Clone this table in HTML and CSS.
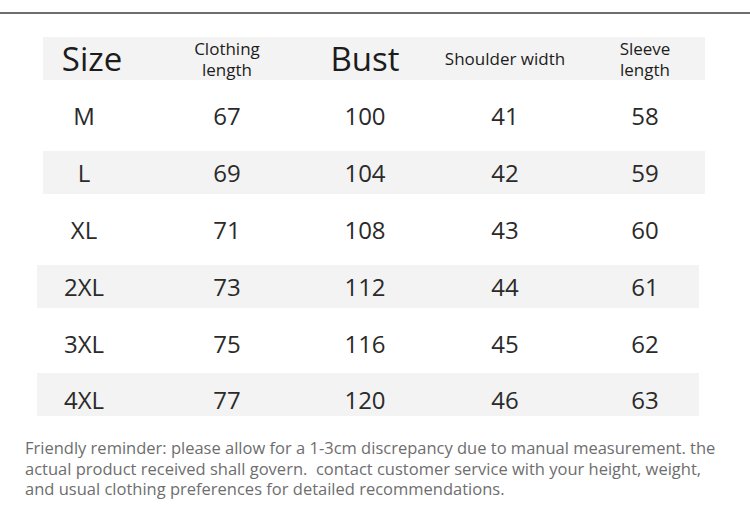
FILE: index.html
```html
<!DOCTYPE html>
<html lang="en">
<head>
<meta charset="utf-8">
<title>Size chart</title>
<link rel="stylesheet" href="styles.css">
</head>
<body>
<div class="topline"></div>
<div class="chart">
  <div class="row head shade">
    <div class="cell big first">Size</div>
    <div class="cell small">Clothing<br>length</div>
    <div class="cell big">Bust</div>
    <div class="cell small">Shoulder width</div>
    <div class="cell small">Sleeve<br>length</div>
  </div>
  <div class="row">
    <div class="cell">M</div><div class="cell">67</div><div class="cell">100</div><div class="cell">41</div><div class="cell">58</div>
  </div>
  <div class="row shade">
    <div class="cell">L</div><div class="cell">69</div><div class="cell">104</div><div class="cell">42</div><div class="cell">59</div>
  </div>
  <div class="row">
    <div class="cell">XL</div><div class="cell">71</div><div class="cell">108</div><div class="cell">43</div><div class="cell">60</div>
  </div>
  <div class="row shade shift">
    <div class="cell">2XL</div><div class="cell">73</div><div class="cell">112</div><div class="cell">44</div><div class="cell">61</div>
  </div>
  <div class="row">
    <div class="cell">3XL</div><div class="cell">75</div><div class="cell">116</div><div class="cell">45</div><div class="cell">62</div>
  </div>
  <div class="row shade shift last">
    <div class="cell">4XL</div><div class="cell">77</div><div class="cell">120</div><div class="cell">46</div><div class="cell">63</div>
  </div>
</div>
<p class="note">Friendly reminder: please allow for a 1-3cm discrepancy due to manual measurement. the actual product received shall govern.&nbsp; contact customer service with your height, weight, and usual clothing preferences for detailed recommendations.</p>
</body>
</html>
```
FILE: styles.css
```css
html, body {
  margin: 0;
  padding: 0;
  background: #ffffff;
}
body {
  width: 750px;
  height: 520px;
  overflow: hidden;
  font-family: "Open Sans", "Noto Sans", sans-serif;
  color: #222;
}
.topline {
  margin-top: 12px;
  height: 2px;
  background: #6e6e6e;
}
.chart {
  display: flex;
  flex-direction: column;
  gap: 14px;
  padding-top: 23px;
  padding-left: 43px;
}
.row {
  width: 662px;
  height: 43px;
  display: grid;
  grid-template-columns: 82px 204px 72px 208px 72px;
  align-items: center;
  box-sizing: border-box;
}
.shade {
  background: #f3f3f3;
}
.shift {
  margin-left: -6px;
  padding-left: 6px;
}
.last {
  margin-top: -6px;
  padding-top: 11px;
}
.cell {
  text-align: center;
  font-size: 24px;
  line-height: 30px;
  color: #2a2a2a;
  white-space: nowrap;
}
.head .cell {
  color: #1c1c1c;
}
.big {
  font-size: 33px;
  line-height: 40px;
}
.first {
  padding-left: 16px;
}
.small {
  font-size: 17px;
  line-height: 21px;
}
.note {
  margin: 22px 0 0 25px;
  width: 700px;
  font-size: 16.5px;
  line-height: 20.5px;
  color: #6e6e6e;
}
```
